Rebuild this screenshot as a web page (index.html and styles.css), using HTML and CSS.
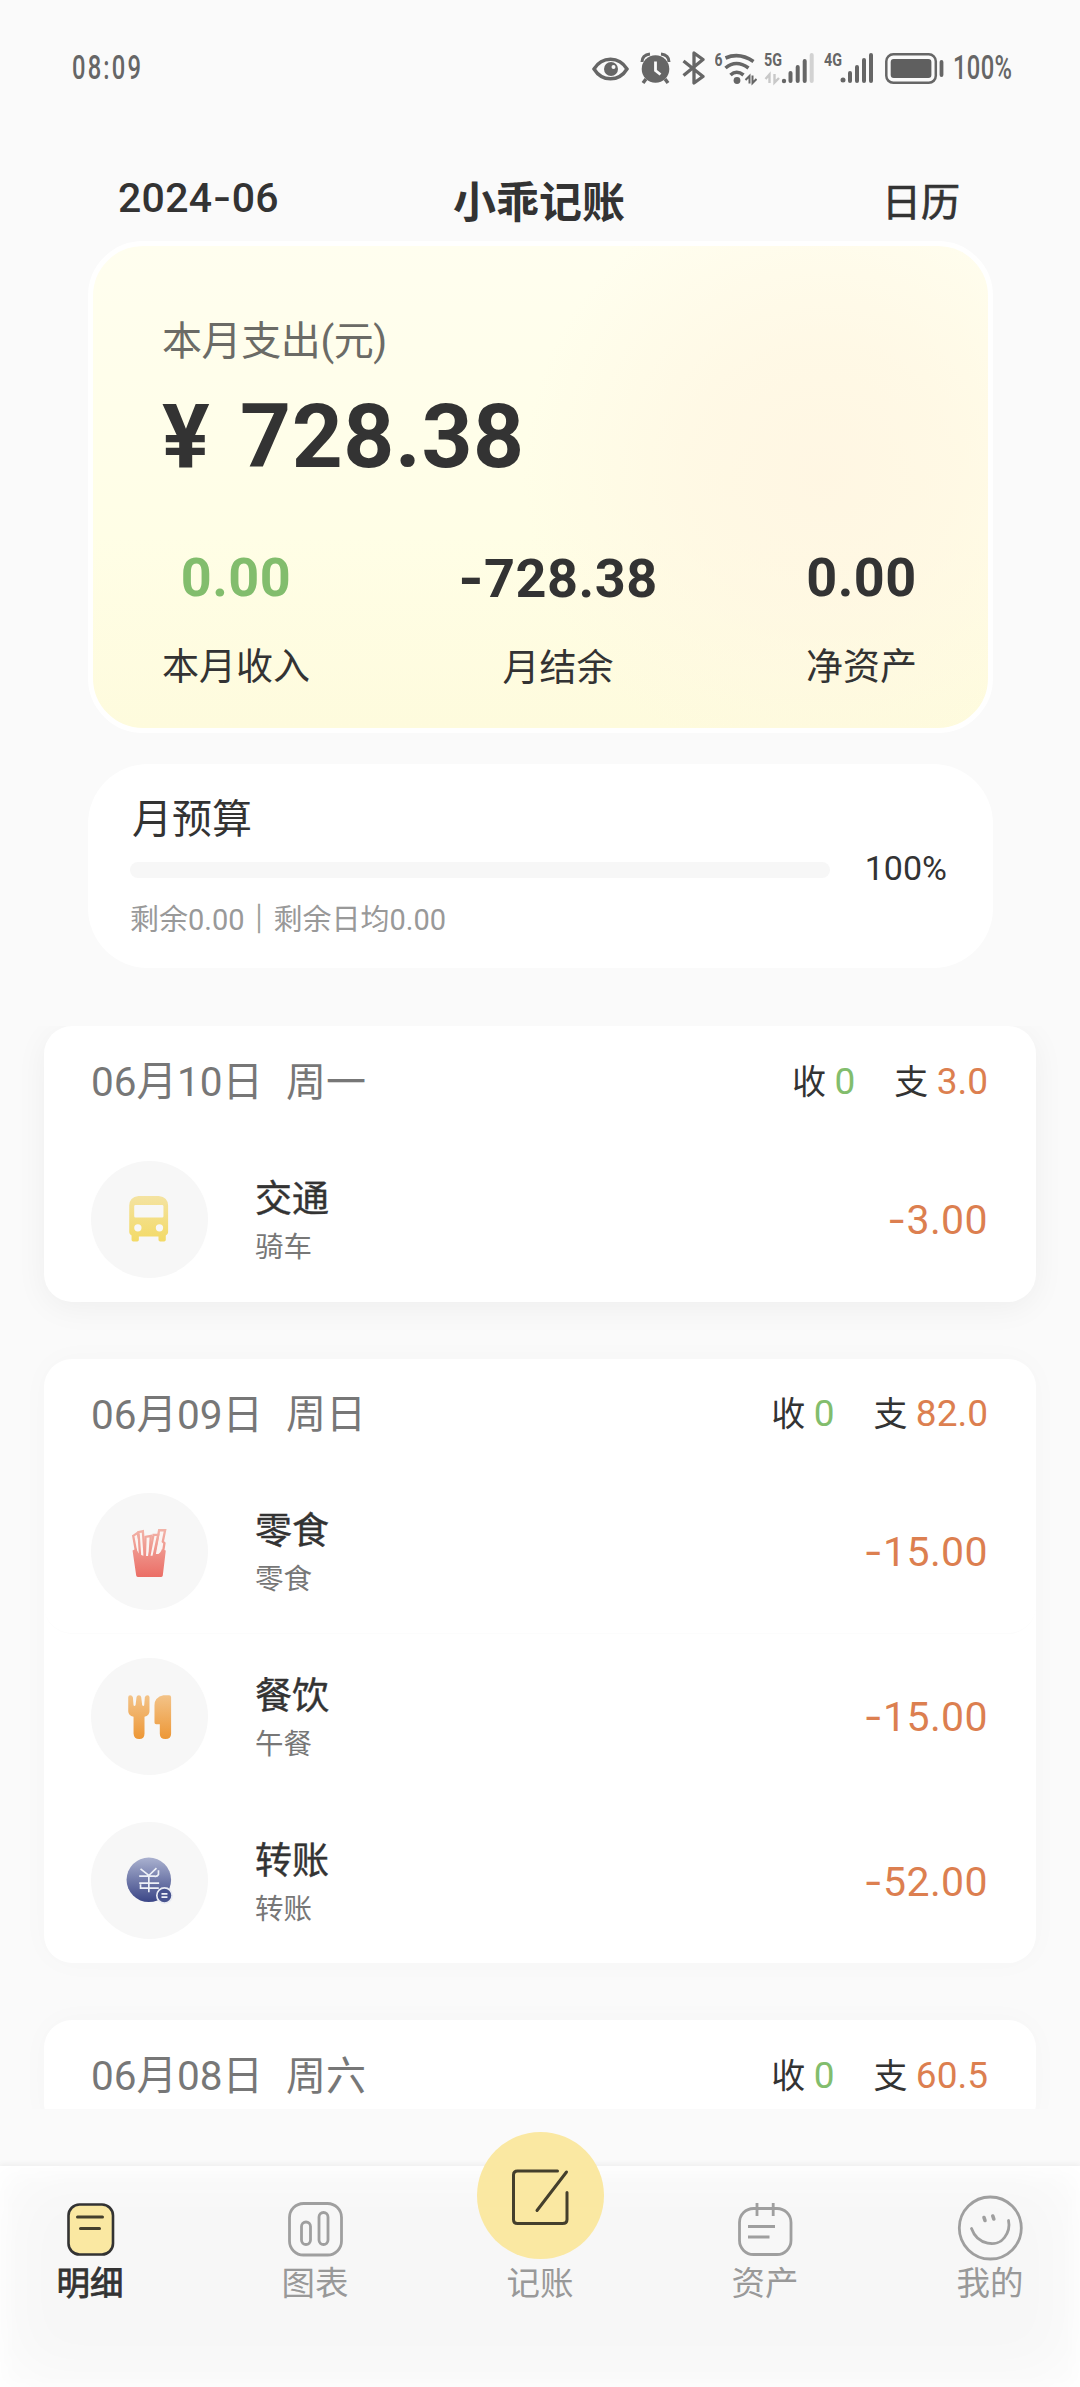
FILE: index.html
```html
<!DOCTYPE html>
<html lang="zh-CN">
<head>
<meta charset="utf-8">
<title>小乖记账</title>
<link rel="stylesheet" href="styles.css">
</head>
<body>
<div class="app">
  <div class="status">
    <span class="clock">08:09</span>
    <div class="indicators">
      <svg width="37" height="36" viewBox="592 50 37 36"><path d="M594 69c8-13 25-13 33 0c-8 13-25 13-33 0z" fill="none" stroke="#666" stroke-width="3.4"/><circle cx="611" cy="69" r="7" fill="#666"/><circle cx="613.500" cy="67" r="2" fill="#fafafa"/></svg>
      <svg class="g11" width="31" height="36" viewBox="640 50 31 36"><circle cx="655.500" cy="69" r="13.800" fill="#666"/><path d="M642 62q0-7 8-8M669 62q0-7-8-8" fill="none" stroke="#666" stroke-width="3"/><path d="M646 79l-3 4M665 79l3 4" stroke="#666" stroke-width="3.500"/><path d="M655.500 61.500v9l5 4" fill="none" stroke="#fafafa" stroke-width="2.800"/></svg>
      <svg class="g11" width="23" height="36" viewBox="682 50 23 36"><path d="M683.500 61l19.500 15.500l-9 6.500v-30l9 6.500l-19.500 16" fill="none" stroke="#666" stroke-width="3.300" stroke-linejoin="round"/></svg>
      <svg class="g10" width="42" height="36" viewBox="715 50 42 36"><text x="714.500" y="65.500" class="net" textLength="8" lengthAdjust="spacingAndGlyphs">6</text><g fill="none" stroke="#666" stroke-width="3.600"><path d="M725.500 58q14-6 28 3.500"/><path d="M725.500 68q10.500-9 23 0"/><path d="M730.500 75q6-5.500 13 0"/></g><circle cx="737" cy="80.500" r="3.400" fill="#666"/><path d="M745.500 80l4-4v7.500M756.500 79l-4 4v-7.500" fill="none" stroke="#666" stroke-width="2"/></svg>
      <svg class="g7" width="50" height="36" viewBox="764 50 50 36"><text x="764" y="66" class="net" textLength="18" lengthAdjust="spacingAndGlyphs">5G</text><path d="M765.500 79l4-4.500v8.500M779 78l-4.500 4.500v-8.500" fill="none" stroke="#c8c8c8" stroke-width="2.400"/><circle cx="784" cy="81" r="2.200" fill="#666"/><path d="M790.500 73v8M797.700 67v14M804.700 61v20" stroke="#666" stroke-width="4" stroke-linecap="round"/><path d="M811.700 55v26" stroke="#d2d2d2" stroke-width="4" stroke-linecap="round"/></svg>
      <svg class="g10" width="49" height="36" viewBox="824 50 49 36"><text x="824" y="66" class="net" textLength="18" lengthAdjust="spacingAndGlyphs">4G</text><circle cx="843" cy="80" r="2.500" fill="#666"/><path d="M850 73v8M857 67v14M864 60v21M871 55v26" stroke="#666" stroke-width="4" stroke-linecap="round"/></svg>
      <svg class="g12" width="59" height="36" viewBox="885 50 59 36"><rect x="886.300" y="54.300" width="49.500" height="28.500" rx="7" fill="none" stroke="#666" stroke-width="2.500"/><rect x="890.700" y="59" width="40.700" height="19" rx="3" fill="#5f5f5f"/><path d="M941.500 62v13" stroke="#666" stroke-width="3.800" stroke-linecap="round"/></svg>
      <span class="battery">100%</span>
    </div>
  </div>

  <header class="header">
    <span class="month">2024<i class="dash">-</i>06</span>
    <h1 class="title">小乖记账</h1>
    <span class="calendar">日历</span>
  </header>

  <section class="summary">
    <div class="summary-label">本月支出(元)</div>
    <div class="summary-total">¥ 728.38</div>
    <div class="stats">
      <div class="stat"><b class="green">0.00</b><span>本月收入</span></div>
      <div class="stat"><b><i class="dash">-</i>728.38</b><span>月结余</span></div>
      <div class="stat"><b>0.00</b><span>净资产</span></div>
    </div>
  </section>

  <section class="budget">
    <div class="budget-title">月预算</div>
    <div class="budget-row"><div class="bar"></div><span class="percent">100%</span></div>
    <div class="budget-note">剩余0.00<i class="sep">｜</i>剩余日均0.00</div>
  </section>

  <main class="days">
    <section class="day shadow">
      <div class="day-head"><span>06月10日</span><span class="week">周一</span><div class="sums"><span>收 <b class="green">0</b></span><span>支 <b class="orange">3.0</b></span></div></div>
      <div class="row">
        <svg class="icon" viewBox="0 0 352 352"><defs><linearGradient id="gy" x1="0" y1="0" x2="0" y2="1"><stop offset="0" stop-color="#f4e3a2"/><stop offset="1" stop-color="#f3da66"/></linearGradient></defs><path fill="url(#gy)" fill-rule="evenodd" d="M143 105h61q28 4 28 29v80q0 6-7 10v13q0 5-5 5h-12q-5 0-5-5v-10h-59v10q0 5-5 5h-12q-5 0-5-5v-13q-7-4-7-10v-80q0-25 28-29zM134 132q-4 0-4 4v30q0 4 4 4h80q4 0 4-4v-30q0-4-4-4zM130 201a11 11 0 1 0 22 0a11 11 0 1 0-22 0zM195 201a11 11 0 1 0 22 0a11 11 0 1 0-22 0z"/></svg>
        <div class="name"><strong>交通</strong><span>骑车</span></div>
        <div class="amount"><i class="dash">-</i>3.00</div>
      </div>
    </section>

    <section class="day">
      <div class="day-head"><span>06月09日</span><span class="week">周日</span><div class="sums"><span>收 <b class="green">0</b></span><span>支 <b class="orange">82.0</b></span></div></div>
      <div class="row seam">
        <svg class="icon" viewBox="0 0 352 352"><defs><linearGradient id="gr" gradientUnits="userSpaceOnUse" x1="0" y1="110" x2="0" y2="252"><stop offset="0" stop-color="#f2b3a8"/><stop offset="1" stop-color="#eb6e66"/></linearGradient></defs><g fill="#fbf4f2" stroke="url(#gr)" stroke-width="7"><path d="M127 129l13-9l18 70h-20z"/><path d="M205 112h18l-7 34l5 5l-6 36h-24z"/><path d="M143 118l13-3l6 80h-14z"/><path d="M164 132l16-3l-4 64h-14z"/><path d="M188 126h14l-14 66h-13z"/></g><path fill="url(#gr)" d="M125 173l12-6q4 18 18 21q22 8 44-3q11-4 14-16l12 4l-9 75q-1 5-6 5h-68q-5 0-6-5z"/></svg>
        <div class="name"><strong>零食</strong><span>零食</span></div>
        <div class="amount"><i class="dash">-</i>15.00</div>
      </div>
      <div class="row">
        <svg class="icon" viewBox="0 0 352 352"><defs><linearGradient id="go" gradientUnits="userSpaceOnUse" x1="0" y1="112" x2="0" y2="244"><stop offset="0" stop-color="#f3c388"/><stop offset="1" stop-color="#ed9736"/></linearGradient></defs><path fill="url(#go)" d="M112 118q0-6 6-6t8 6l2 24q2 5 6 0l3-25q1-5 7-5t7 5l3 25q4 5 6 0l2-24q2-6 8-6t6 6v42q0 12-15 17v50q0 17-16 17t-17-17v-50q-16-5-16-17zM191 142q0-24 27-30h17q6 0 6 6v109q0 17-17 17t-17-17v-28h-11q-5 0-5-5z"/></svg>
        <div class="name"><strong>餐饮</strong><span>午餐</span></div>
        <div class="amount"><i class="dash">-</i>15.00</div>
      </div>
      <div class="row">
        <svg class="icon" viewBox="0 0 352 352"><defs><linearGradient id="gb" gradientUnits="userSpaceOnUse" x1="0" y1="107" x2="0" y2="241"><stop offset="0" stop-color="#aab1cf"/><stop offset="1" stop-color="#3b4687"/></linearGradient></defs><circle cx="174" cy="174" r="67" fill="url(#gb)"/><g fill="none" stroke="#edf0f7" stroke-width="5"><path d="M149 141l25 20l23-22M203 145v13q-4 7-12 5h-46M174 160v51M145 184h60M204 199h-55v-12"/></g><circle cx="221" cy="221" r="23" fill="#48548f" stroke="#e9ebf3" stroke-width="5"/><path d="M212 216h18M212 226h18" stroke="#f0f2f8" stroke-width="5"/></svg>
        <div class="name"><strong>转账</strong><span>转账</span></div>
        <div class="amount"><i class="dash">-</i>52.00</div>
      </div>
    </section>

    <section class="day cut">
      <div class="day-head"><span>06月08日</span><span class="week">周六</span><div class="sums"><span>收 <b class="green">0</b></span><span>支 <b class="orange">60.5</b></span></div></div>
    </section>
  </main>

  <nav class="nav">
    <a class="tab active"><svg width="66" height="66" viewBox="57 2195 66 66"><rect x="68.500" y="2204.500" width="44.500" height="50" rx="11" fill="#fae8a2" stroke="#333" stroke-width="2.600"/><path d="M77.500 2217h25M80.500 2228.500h19" stroke="#443f2c" stroke-width="3" stroke-linecap="round"/></svg><span>明细</span></a>
    <a class="tab"><svg width="66" height="66" viewBox="282 2195 66 66"><g fill="none" stroke="#9f9f9f" stroke-width="2.800"><rect x="289.500" y="2203.500" width="52" height="51.500" rx="14"/><rect x="301.500" y="2222" width="9" height="22.500" rx="4.500"/><rect x="319" y="2212.500" width="9" height="32" rx="4.500"/></g></svg><span>图表</span></a>
    <a class="tab add"><svg width="127" height="127" viewBox="476.500 2132 127 127"><circle cx="540" cy="2195.500" r="63.500" fill="#fae8a2"/><path d="M557 2171h-40q-4 0-4 4v44.500q0 4 4 4h45q4.500 0 4.500-4v-27M566 2172l-29.500 38.500" fill="none" stroke="#443f2c" stroke-width="3" stroke-linecap="round"/></svg><span>记账</span></a>
    <a class="tab"><svg width="66" height="66" viewBox="731.500 2195 66 66"><g fill="none" stroke="#9f9f9f" stroke-width="2.800"><rect x="739" y="2208.500" width="51.500" height="46" rx="14"/><path d="M756.500 2203v13M772.700 2203v13M747.500 2226.500h27M747.500 2237h21.500"/></g></svg><span>资产</span></a>
    <a class="tab"><svg width="66" height="66" viewBox="956 2195 66 66"><g fill="none" stroke="#9f9f9f" stroke-width="2.800" stroke-linecap="round"><circle cx="989.300" cy="2228" r="31"/><path d="M970.500 2228.500c6 17 26 19 33 9q6-8 4-17"/><path stroke-width="3.600" d="M983 2217.500l1 3M991.800 2216l1 3"/></g></svg><span>我的</span></a>
  </nav>
</div>
</body>
</html>
```
FILE: styles.css
```css
* { box-sizing: border-box; }

body {
  margin: 0;
  background: #fafafa;
  color: #333;
  font-family: Roboto, "Noto Sans CJK SC", sans-serif;
}

h1, b, i, strong { margin: 0; font-weight: inherit; font-style: normal; }
svg { display: block; flex: none; }

.app {
  width: 1080px;
  height: 2387px;
  display: flex;
  flex-direction: column;
  overflow: hidden;
}

.dash { font-family: Inter, sans-serif; }
.green { color: #82bd6d; }
.orange { color: #dc7f50; }

/* status bar */
.status {
  height: 136px;
  flex: none;
  padding: 0 0 0 72px;
  display: flex;
  align-items: center;
  color: #666;
}
.clock, .battery {
  font-size: 33px;
  font-weight: 500;
  line-height: 36px;
  transform: scaleX(.72);
  transform-origin: left;
  white-space: nowrap;
}
.clock { width: 520px; letter-spacing: 3px; }
.indicators { display: flex; align-items: center; height: 36px; }
.battery { margin-left: 9px; width: 60px; letter-spacing: .5px; }
.net { font: 700 18px Roboto, sans-serif; fill: #666; }
.g7 { margin-left: 7px; }
.g10 { margin-left: 10px; }
.g11 { margin-left: 11px; }
.g12 { margin-left: 12px; }

/* page header */
.header {
  height: 105px;
  flex: none;
  display: grid;
  grid-template-columns: 1fr auto 1fr;
  padding: 36px 120px 0 118px;
}
.month { font-size: 41px; line-height: 50px; font-weight: 500; letter-spacing: .3px; }
.title { font-size: 43px; line-height: 62px; font-weight: 700; }
.calendar {
  font-size: 39px;
  line-height: 62px;
  text-align: right;
  -webkit-text-stroke: .7px #333;
}

/* month summary */
.summary {
  width: 905px;
  height: 492px;
  flex: none;
  margin: 0 0 31px 88px;
  padding: 67px 71px 0 69px;
  border: 5px solid #fff;
  border-radius: 55px;
  background:
    radial-gradient(circle at 730px 230px, rgba(255, 245, 226, .85), rgba(255, 245, 226, .6) 130px, rgba(255, 245, 226, 0) 300px),
    linear-gradient(#fffeef, #fffee6 60%, #fefbdd);
}
.summary-label { font-size: 40px; line-height: 58px; color: #6b6b66; letter-spacing: -.4px; }
.summary-total { margin-top: 14px; font-size: 89px; line-height: 104px; font-weight: 700; letter-spacing: .6px; word-spacing: 7px; }
.stats { display: flex; justify-content: space-between; margin-top: 57px; }
.stat { display: flex; flex-direction: column; align-items: center; }
.stat b { font-size: 54px; line-height: 64px; font-weight: 700; letter-spacing: .5px; }
.stat span { margin-top: 31px; font-size: 37px; line-height: 54px; }

/* budget */
.budget {
  width: 905px;
  height: 204px;
  flex: none;
  margin: 0 0 58px 88px;
  padding: 27px 46px 0 42px;
  border-radius: 60px;
  background: #fff;
}
.budget-title { padding-left: 2px; font-size: 40px; line-height: 58px; }
.budget-row { display: flex; align-items: center; height: 42px; margin-top: -2px; justify-content: space-between; }
.bar { width: 700px; height: 16px; border-radius: 8px; background: #f7f7f7; margin-top: 3px; }
.percent { font-size: 34px; }
.budget-note { margin-top: 9px; font-size: 29px; line-height: 44px; color: #999; white-space: nowrap; }
.sep { -webkit-text-stroke: .6px #999; }

/* daily records */
.days {
  width: 1080px;
  height: 1083px;
  flex: none;
  padding: 0 44px;
  display: flex;
  flex-direction: column;
  gap: 57px;
  overflow: hidden;
  overflow: clip;
  overflow-clip-margin: 0;
}
.day {
  flex: none;
  border-radius: 28px;
  background: #fff;
  box-shadow: 0 0 30px rgba(0, 0, 0, .025);
}
.day.shadow { box-shadow: 0 6px 32px rgba(0, 0, 0, .05); }
.day-head {
  height: 111px;
  padding: 0 48px 6px 47px;
  display: flex;
  align-items: center;
  font-size: 40.500px;
  color: #777;
}
.week { margin-left: 23px; font-size: 40px; }
.sums { margin-left: auto; padding-top: 1px; display: flex; gap: 39px; font-size: 34px; color: #333; }
.sums b { font-size: 37px; }
.row {
  height: 164.500px;
  padding: 0 48px 0 47px;
  display: flex;
  align-items: center;
}
.seam { border-bottom: 1px solid #fcfcfc; border-radius: 0 0 28px 28px; }
.icon { width: 117px; height: 117px; border-radius: 50%; background: #f7f7f7; }
.name { margin-left: 47px; padding-top: 3px; display: flex; flex-direction: column; color: #777; font-size: 28.500px; line-height: 41px; }
.name strong { font-size: 37px; line-height: 54px; color: #333; -webkit-text-stroke: .4px #333; }
.amount { margin-left: auto; font-size: 41px; color: #dc7f50; letter-spacing: .4px; }

/* bottom tabs */
.nav {
  height: 221px;
  margin-top: 57px;
  flex: none;
  padding: 29px 57px 0;
  display: flex;
  justify-content: space-between;
  background: #f7f7f7;
  box-shadow: 0 -2px 5px #eee, inset 0 0 70px #fff, inset 0 4px 20px #fff;
}
.tab {
  width: 66px;
  height: 120px;
  display: flex;
  flex-direction: column;
  align-items: center;
  color: #999;
  font-size: 33.500px;
  line-height: 48px;
  white-space: nowrap;
}
.tab span { margin-top: -1px; }
.active { color: #333; -webkit-text-stroke: .8px #333; }
.add svg { margin-top: -63px; }
.add span { margin-top: 1px; }
```
